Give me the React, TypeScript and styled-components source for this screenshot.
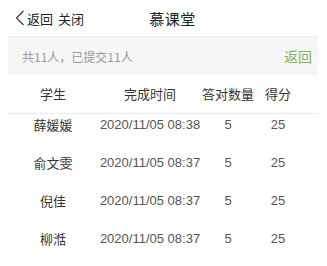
import React from "react";
import styled, { createGlobalStyle } from "styled-components";

const Global = createGlobalStyle`
  html, body { margin: 0; padding: 0; background: #fff; }
  body { font-family: "Noto Sans CJK SC", "Liberation Sans", sans-serif; }
`;

const Page = styled.div`
  width: 310px;
  margin-left: 8px;
  height: 266px;
  display: flex;
  flex-direction: column;
  overflow: hidden;
  background: #fff;
`;

const NavBar = styled.div`
  height: 36px;
  display: grid;
  grid-template-columns: 1fr auto 1fr;
  align-items: center;
  padding-left: 7px;
  box-sizing: border-box;
`;

const NavLeft = styled.div`
  display: flex;
  align-items: center;
  font-size: 13px;
  color: #222;
`;

const NavLink = styled.span<{ $gap?: number }>`
  margin-left: ${(p) => p.$gap ?? 0}px;
`;

const Title = styled.div`
  font-size: 15px;
  color: #222;
  letter-spacing: 0.5px;
  margin-left: 12px;
`;

const InfoBar = styled.div`
  height: 38px;
  background: #f6f6f6;
  border-top: 1px solid #ededed;
  display: flex;
  align-items: center;
  justify-content: space-between;
  padding: 0 6px 0 14px;
`;

const InfoText = styled.span`
  font-size: 12px;
  color: #9a9a9a;
`;

const BackLink = styled.span`
  font-size: 14px;
  color: #7cb34f;
`;

const Row = styled.div<{ $h: number; $head?: boolean }>`
  display: grid;
  grid-template-columns: 90px 104px 52px 48px;
  height: ${(p) => p.$h}px;
  align-items: center;
  justify-items: center;
  font-size: 13px;
  color: ${(p) => (p.$head ? "#333" : "#444")};
  flex-shrink: 0;
`;

const Head = styled(Row)`
  border-bottom: 1px solid #ededed;
  box-sizing: border-box;
  padding-bottom: 2px;
`;

const Cell = styled.span<{ $name?: boolean }>`
  font-family: ${(p) =>
    p.$name ? `"Noto Sans CJK SC", sans-serif` : `"Liberation Sans", "Noto Sans CJK SC", sans-serif`};
  color: ${(p) => (p.$name ? "#333" : "#555")};
`;

const Body = styled.div`
  flex: 1;
  overflow: hidden;
`;

const List = styled.div`
  margin-top: -9px;
`;

const rows = [
  ["薛媛媛", "2020/11/05 08:38", "5", "25"],
  ["俞文雯", "2020/11/05 08:37", "5", "25"],
  ["倪佳", "2020/11/05 08:37", "5", "25"],
  ["柳湉", "2020/11/05 08:37", "5", "25"],
];

const Chevron = () => (
  <svg width="10" height="16" viewBox="0 0 10 16" style={{ marginRight: 2 }}>
    <path d="M8.5 1 L1.5 8 L8.5 15" fill="none" stroke="#333" strokeWidth="1.1" />
  </svg>
);

export default function App() {
  return (
    <>
      <Global />
      <Page>
        <NavBar>
          <NavLeft>
            <Chevron />
            <NavLink>返回</NavLink>
            <NavLink $gap={5}>关闭</NavLink>
          </NavLeft>
          <Title>慕课堂</Title>
          <div />
        </NavBar>
        <InfoBar>
          <InfoText>共11人，已提交11人</InfoText>
          <BackLink>返回</BackLink>
        </InfoBar>
        <Head $h={39} $head>
          <span>学生</span>
          <span>完成时间</span>
          <span>答对数量</span>
          <span>得分</span>
        </Head>
        <Body>
          <List>
            {rows.map((r, i) => (
              <Row key={i} $h={38}>
                <Cell $name>{r[0]}</Cell>
                <Cell>{r[1]}</Cell>
                <Cell>{r[2]}</Cell>
                <Cell>{r[3]}</Cell>
              </Row>
            ))}
          </List>
        </Body>
      </Page>
    </>
  );
}
